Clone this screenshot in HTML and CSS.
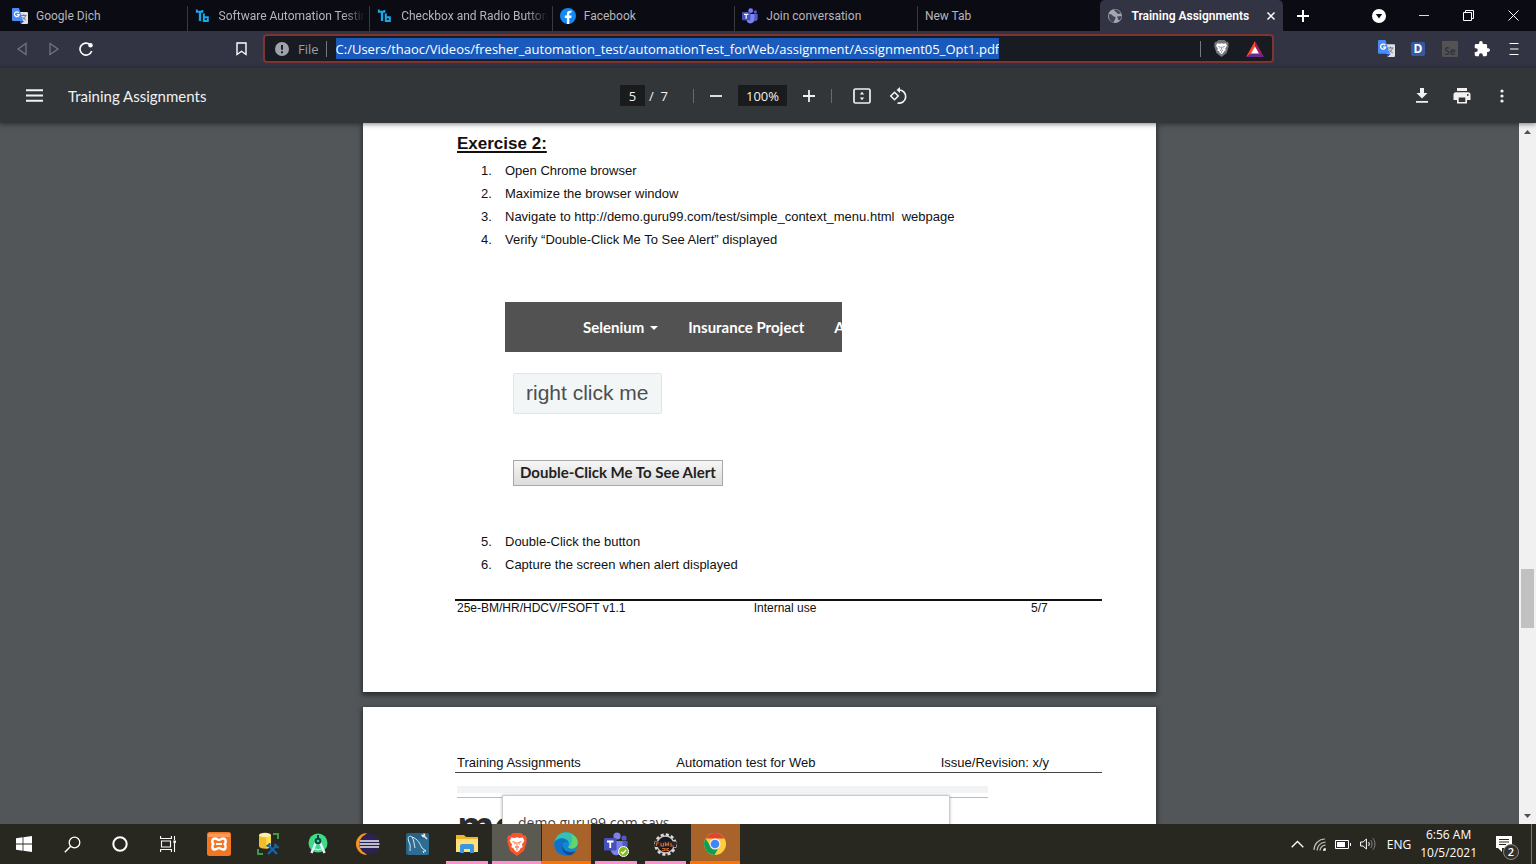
FILE: index.html
```
<!DOCTYPE html>
<html lang="en">
<head>
<meta charset="utf-8">
<title>Training Assignments</title>
<link rel="stylesheet" href="styles.css">
</head>
<body>
<svg class="defs" aria-hidden="true">
  <symbol id="translate" viewBox="0 0 16 16">
    <path d="M6 4h9a1 1 0 0 1 1 1v10a1 1 0 0 1-1 1H9z" fill="#dfe1e5"/>
    <path d="M9 7.500h5.500M11.800 6.200v1.300M13.600 7.500c-.4 2-2 3.700-3.600 4.600M10.600 9c.6 1.300 1.800 2.400 3.300 3" stroke="#6b7078" stroke-width=".9" fill="none"/>
    <path d="M8 13h4l-3 3z" fill="#2a3be0"/>
    <path d="M1 0h6l4 13H1a1 1 0 0 1-1-1V1a1 1 0 0 1 1-1z" fill="#4a8cf5"/>
    <path d="M6.800 4.800A2.400 2.400 0 1 0 7.200 6.700H4.900" stroke="#fff" stroke-width="1.200" fill="none"/>
  </symbol>
  <symbol id="toolsqa" viewBox="0 0 16 16">
    <path d="M1.800 1.500v2.200h5.500V2" stroke="#1ba8e8" stroke-width="1.900" fill="none"/>
    <path d="M5 3v10" stroke="#1ba8e8" stroke-width="2.300"/>
    <path d="M8.800 5.500v7.400h4V9.200h-4" stroke="#1ba8e8" stroke-width="2" fill="none"/>
  </symbol>
  <symbol id="teams" viewBox="0 0 24 24">
    <circle cx="20" cy="6" r="2.600" fill="#5059c9"/>
    <circle cx="13" cy="4" r="3.600" fill="#7b83eb"/>
    <path d="M17 9h6.500v7a3.800 3.800 0 0 1-6.500 2.500z" fill="#5059c9"/>
    <path d="M7 9h11.500v8a6 6 0 0 1-11.500 2.500z" fill="#7b83eb"/>
    <rect x="0" y="6" width="12.500" height="12.500" rx="1.200" fill="#4650bb"/>
    <path d="M3 9.500h6.500M6.250 9.500v6.500" stroke="#fff" stroke-width="1.800"/>
  </symbol>
  <symbol id="lion" viewBox="0 0 24 28">
    <path d="M7 0h10l3 3 2-.2 2 3.200-.7 2L24 10l-3.500 11.500L12 28l-8.500-6.500L0 10l.7-2L0 6l2-3.200L4 3z" fill="currentColor"/>
    <path d="M5 5.500l4 .5 3-.8 3 .8 4-.5 2 4-3 4.500 1 3-3 2-1 2-3 2.500-3-2.500-1-2-3-2 1-3L3 9.500z" fill="#fff"/>
    <path d="M6.500 10.500l3.500 1-.8 2.500M17.500 10.500l-3.500 1 .8 2.500M12 11v4M9.800 17l2.200-1.200 2.200 1.200-2.200 1.500zM12 19v2.500" stroke="currentColor" stroke-width="1.100" fill="none"/>
  </symbol>
</svg>

<div class="tabstrip">
  <nav class="tabs" aria-label="Tabs">
    <a class="tab" href="#"><svg class="fav"><use href="#translate"/></svg><span class="tab-label">Google Dịch</span></a>
    <a class="tab" href="#"><svg class="fav"><use href="#toolsqa"/></svg><span class="tab-label fade">Software Automation Testin</span></a>
    <a class="tab" href="#"><svg class="fav"><use href="#toolsqa"/></svg><span class="tab-label fade">Checkbox and Radio Button</span></a>
    <a class="tab" href="#"><svg class="fav" viewBox="0 0 16 16"><circle cx="8" cy="8" r="8" fill="#1488f5"/><path d="M6.900 16V10H4.800V7.600h2.100V6c0-2.200 1.200-3.300 3.100-3.300l1.600.1v2h-1c-1 0-1.300.5-1.300 1.200v1.600h2.300L11.200 10H9.300v6z" fill="#fff"/></svg><span class="tab-label">Facebook</span></a>
    <a class="tab" href="#"><svg class="fav"><use href="#teams"/></svg><span class="tab-label">Join conversation</span></a>
    <a class="tab" href="#"><span class="tab-label">New Tab</span></a>
    <a class="tab active" href="#"><svg class="fav" viewBox="0 0 16 16"><circle cx="8" cy="8" r="7" fill="#a3a7b0"/><path d="M2 6c2 .5 3 0 3.500 1.500S8 8 8.500 9.500 7 12 6.500 14.500C3 14 1.500 10.500 2 6zM7 1.500c0 2 2 1.500 2.500 3S12 6 14 5.500c-1-2.500-4-4.500-7-4zM10 8.500l4.500-.5c0 2-1 3.500-2.500 4.500-1-.5-1-2.500-2-4z" fill="#414453"/></svg><span class="tab-label">Training Assignments</span><svg class="tab-close" viewBox="0 0 10 10"><path d="M1.500 1.500l7 7M8.500 1.500l-7 7" stroke="#fff" stroke-width="1.500"/></svg></a>
  </nav>
  <button class="new-tab" aria-label="New tab"><svg width="12" height="12" viewBox="0 0 12 12"><path d="M6 0v12M0 6h12" stroke="#fff" stroke-width="2"/></svg></button>
  <div class="win-controls">
    <button aria-label="Search tabs"><svg width="14" height="14" viewBox="0 0 14 14"><circle cx="7" cy="7" r="7" fill="#fff"/><path d="M3.800 5h6.400L7 9.600z" fill="#0b0b14"/></svg></button>
    <button aria-label="Minimize"><svg width="10" height="10" viewBox="0 0 10 10"><path d="M0 4.500h10" stroke="#ddd"/></svg></button>
    <button aria-label="Restore"><svg width="11" height="11" viewBox="0 0 11 11"><path d="M.5 2.500h8v8h-8zM2.500 2.500v-2h8v8h-2" stroke="#fff" fill="none"/></svg></button>
    <button aria-label="Close"><svg width="11" height="11" viewBox="0 0 11 11"><path d="M.5.5l10 10M10.500.5l-10 10" stroke="#fff"/></svg></button>
  </div>
</div>

<div class="navbar">
  <button class="nav-btn" aria-label="Back"><svg width="12" height="14" viewBox="0 0 12 14"><path d="M10 1.500v11L2 7z" stroke="#70737f" stroke-width="1.300" fill="none"/></svg></button>
  <button class="nav-btn" aria-label="Forward"><svg width="12" height="14" viewBox="0 0 12 14"><path d="M2 1.500v11L10 7z" stroke="#70737f" stroke-width="1.300" fill="none"/></svg></button>
  <button class="nav-btn" aria-label="Reload"><svg width="14" height="14" viewBox="0 0 14 14"><path d="M11 2.600A6 6 0 1 0 12.700 9" stroke="#fff" stroke-width="1.600" fill="none"/><circle cx="11.500" cy="3.200" r="2.200" fill="#fff"/></svg></button>
  <button class="nav-btn bookmark" aria-label="Bookmark"><svg width="11" height="14" viewBox="0 0 11 14"><path d="M1 1h9v11.500L5.500 9.300 1 12.500z" stroke="#fff" stroke-width="1.400" fill="none"/></svg></button>
  <div class="address">
    <svg class="info" viewBox="0 0 14 14"><circle cx="7" cy="7" r="7" fill="#9fa2ab"/><path d="M7 3v4.800M7 9.300v2" stroke="#191b22" stroke-width="1.900"/></svg>
    <label class="scheme" for="url">File</label>
    <span class="bar"></span>
    <input id="url" class="url" type="text" spellcheck="false" value="C:/Users/thaoc/Videos/fresher_automation_test/automationTest_forWeb/assignment/Assignment05_Opt1.pdf">
    <span class="bar end"></span>
    <button class="addr-btn" aria-label="Brave Shields"><svg class="shield" width="15" height="17"><use href="#lion"/></svg></button>
    <button class="addr-btn" aria-label="Brave Rewards"><svg width="18" height="16" viewBox="0 0 18 16"><path d="M9 0L0 16l9-5z" fill="#ff4724"/><path d="M9 0l9 16-9-5z" fill="#9e1f63"/><path d="M0 16h18l-9-6z" fill="#662d91"/><path d="M9 5.500l4 7H5z" fill="#fff"/></svg></button>
  </div>
  <div class="extensions">
    <button class="nav-btn" aria-label="Google Translate"><svg width="17" height="17"><use href="#translate"/></svg></button>
    <button class="nav-btn" aria-label="Dictionary"><span class="ext-d">D</span></button>
    <button class="nav-btn" aria-label="Selenium IDE"><span class="ext-se">Se</span></button>
    <button class="nav-btn" aria-label="Extensions"><svg width="16" height="16" viewBox="1 1 22 22"><path d="M20.500 11H19V7a2 2 0 0 0-2-2h-4V3.500a2.500 2.500 0 0 0-5 0V5H4a2 2 0 0 0-2 2v3.800h1.500a2.700 2.700 0 0 1 0 5.400H2V20c0 1.100.9 2 2 2h3.800v-1.500a2.700 2.700 0 0 1 5.400 0V22H17a2 2 0 0 0 2-2v-4h1.500a2.500 2.500 0 0 0 0-5z" fill="#fff"/></svg></button>
    <button class="nav-btn" aria-label="Menu"><svg width="10" height="14" viewBox="0 0 10 14"><path d="M.5 1.500h9M1 7h8.500M.5 12.500h9" stroke="#fff" stroke-width="1.200"/></svg></button>
  </div>
</div>

<div class="pdf-bar">
  <div class="pdf-left">
    <button class="icon-btn wide" aria-label="Sidebar"><svg width="17" height="13" viewBox="0 0 17 13"><path d="M0 1.200h17M0 6.500h17M0 11.800h17" stroke="#f1f1f1" stroke-width="1.900"/></svg></button>
    <span class="doc-title">Training Assignments</span>
  </div>
  <div class="pdf-center">
    <input class="page-no" type="text" value="5" aria-label="Page number">
    <span class="page-total">/&nbsp; 7</span>
    <span class="sep"></span>
    <button class="icon-btn" aria-label="Zoom out"><svg width="12" height="12" viewBox="0 0 12 12"><path d="M0 6h12" stroke="#f1f1f1" stroke-width="1.800"/></svg></button>
    <input class="zoom" type="text" value="100%" aria-label="Zoom level">
    <button class="icon-btn" aria-label="Zoom in"><svg width="12" height="12" viewBox="0 0 12 12"><path d="M0 6h12M6 0v12" stroke="#f1f1f1" stroke-width="1.800"/></svg></button>
    <span class="sep tight"></span>
    <button class="icon-btn fit" aria-label="Fit to page"><svg width="18" height="16" viewBox="0 0 18 16"><rect x="1" y="1" width="16" height="14" rx="1.500" stroke="#f1f1f1" stroke-width="1.700" fill="none"/><path d="M6.800 6.500L9 3.700l2.200 2.800zM6.800 9.500L9 12.300l2.200-2.800z" fill="#f1f1f1"/></svg></button>
    <button class="icon-btn rotate" aria-label="Rotate"><svg width="18" height="18" viewBox="0 0 18 18"><path d="M5.500 5.300L9.200 9l-3.700 3.700L1.800 9z" stroke="#f1f1f1" stroke-width="1.600" fill="none"/><path d="M10 3a6.600 6.600 0 1 1-1.500 13" stroke="#f1f1f1" stroke-width="1.700" fill="none"/><path d="M11 0v6L7.500 3z" fill="#f1f1f1"/></svg></button>
  </div>
  <div class="pdf-right">
    <button class="icon-btn" aria-label="Download"><svg width="12" height="15" viewBox="0 0 12 15"><path d="M4 0h4v5h3.500L6 10.500.5 5H4zM0 13h12v1.700H0z" fill="#f1f1f1"/></svg></button>
    <button class="icon-btn" aria-label="Print"><svg width="18" height="16" viewBox="0 0 18 16"><path d="M4 0h10v3H4zM3 4.200h12a2.500 2.500 0 0 1 2.500 2.500V12H14v3.500H4V12H.5V6.700A2.500 2.500 0 0 1 3 4.200z" fill="#f1f1f1"/><path d="M5.700 9.500h6.600V14H5.700z" fill="#323639"/><circle cx="14.800" cy="7" r=".9" fill="#323639"/></svg></button>
    <button class="icon-btn" aria-label="More actions"><svg width="4" height="14" viewBox="0 0 4 14"><circle cx="2" cy="2" r="1.600" fill="#f1f1f1"/><circle cx="2" cy="7" r="1.600" fill="#f1f1f1"/><circle cx="2" cy="12" r="1.600" fill="#f1f1f1"/></svg></button>
  </div>
</div>

<div class="viewer">
  <main class="pages">
    <article class="page">
      <h1 class="exercise">Exercise 2:</h1>
      <ol class="steps">
        <li>Open Chrome browser</li>
        <li>Maximize the browser window</li>
        <li>Navigate to http://demo.guru99.com/test/simple_context_menu.html&nbsp; webpage</li>
        <li>Verify “Double-Click Me To See Alert” displayed</li>
      </ol>
      <div class="demo">
        <div class="demo-nav">
          <a href="#">Selenium<span class="caret"></span></a>
          <a href="#">Insurance Project</a>
          <a href="#">A</a>
        </div>
        <button class="right-click">right click me</button>
        <button class="double-click">Double-Click Me To See Alert</button>
      </div>
      <ol class="steps more" start="5">
        <li>Double-Click the button</li>
        <li>Capture the screen when alert displayed</li>
      </ol>
      <footer class="page-foot"><span>25e-BM/HR/HDCV/FSOFT v1.1</span><span>Internal use</span><span>5/7</span></footer>
    </article>
    <article class="page next">
      <header class="page-head"><span>Training Assignments</span><span>Automation test for Web</span><span>Issue/Revision: x/y</span></header>
      <div class="alert-shot">
        <div class="shot-strip"></div>
        <div class="shot-heading">me</div>
        <div class="shot-dialog">demo.guru99.com says</div>
      </div>
    </article>
  </main>
  <div class="scrollbar">
    <svg width="7" height="4" viewBox="0 0 7 4"><path d="M0 4L3.500 0 7 4z" fill="#505050"/></svg>
    <div class="track"><div class="thumb"></div></div>
    <svg width="7" height="4" viewBox="0 0 7 4"><path d="M0 0l3.500 4L7 0z" fill="#505050"/></svg>
  </div>
</div>

<div class="taskbar">
  <div class="system">
    <button class="task" aria-label="Start"><svg width="16" height="16" viewBox="0 0 16 16"><path d="M0 2.200l6.600-.9v6.300H0zM7.400 1.200L16 0v7.600H7.400zM0 8.400h6.600v6.300L0 13.800zM7.400 8.400H16V16l-8.600-1.200z" fill="#fff"/></svg></button>
    <button class="task" aria-label="Search"><svg width="17" height="17" viewBox="0 0 17 17"><circle cx="10.500" cy="6.500" r="5.300" stroke="#fff" stroke-width="1.300" fill="none"/><path d="M6.700 10.300L.8 16.200" stroke="#fff" stroke-width="1.400"/></svg></button>
    <button class="task" aria-label="Cortana"><svg width="16" height="16" viewBox="0 0 16 16"><circle cx="8" cy="8" r="6.700" stroke="#fff" stroke-width="2" fill="none"/></svg></button>
    <button class="task" aria-label="Task view"><svg width="17" height="16" viewBox="0 0 17 16"><path d="M.6 0v2.500h10.800V0M.6 16v-2.500h10.800V16M1.500 5h9v6h-9zM14.500 0v4M14.500 7v9" stroke="#fff" stroke-width="1.100" fill="none"/><path d="M13.400 4.500h2.500V7h-2.500z" fill="#fff"/></svg></button>
  </div>
  <div class="apps">
    <button class="task" aria-label="XAMPP"><svg width="24" height="24" viewBox="0 0 24 24"><rect width="24" height="24" rx="2.500" fill="#f37623"/><path d="M1 1.500h22V5H1z" fill="#f89a59"/><path d="M8 6.500c2 0 3 1.500 4 1.500s2-1.500 4-1.500c2.600 0 3.700 3.400 1.700 5.500 2 2.100.9 5.500-1.700 5.500-2 0-3-1.500-4-1.500s-2 1.500-4 1.500c-2.600 0-3.700-3.400-1.700-5.500C4.300 9.900 5.400 6.500 8 6.500z" stroke="#fff" stroke-width="2.500" fill="none"/><path d="M9 12h6" stroke="#fff" stroke-width="2"/></svg></button>
    <button class="task" aria-label="SQL Server"><svg width="24" height="24" viewBox="0 0 24 24"><path d="M17 2h5v5M2 17v5h5" stroke="#3e9a43" stroke-width="2" fill="none"/><path d="M3 3v11c0 3.500 12 3.500 12 0V3z" fill="#f3bd29"/><path d="M10 3v13.500c3-.3 5-1.300 5-2.500V3z" fill="#ffdc4a"/><ellipse cx="9" cy="3" rx="6" ry="2.200" fill="#fff0ad"/><path d="M12 13l9 9M21 13l-9 9" stroke="#1864a8" stroke-width="2.300"/><path d="M10.500 14.500l4-3M18.500 12l2.500 3 2 .5" stroke="#1864a8" stroke-width="2"/></svg></button>
    <button class="task" aria-label="Android Studio"><svg width="22" height="22" viewBox="0 0 22 22"><circle cx="11" cy="10" r="9.500" fill="#3ddc84"/><path d="M10 7L4.500 20M12 7l5.500 13" stroke="#e3effa" stroke-width="2.500"/><path d="M6 15c3 2 7 2 10 0" stroke="#e3effa" stroke-width="1.500" fill="none"/><circle cx="11" cy="8" r="3.300" fill="#123d4f"/><circle cx="11" cy="8" r="1.300" fill="#3ddc84"/><path d="M11 2v3" stroke="#123d4f" stroke-width="2"/></svg></button>
    <button class="task" aria-label="Eclipse"><svg width="24" height="24" viewBox="0 0 24 24"><path d="M11 1A11 11 0 0 0 11 23 15 15 0 0 1 11 1z" fill="#f7941e"/><circle cx="13.500" cy="12" r="10.300" fill="#2c2255"/><path d="M4 9h19M3.500 12h20M4 15h19" stroke="#eee" stroke-width="1.700"/></svg></button>
    <button class="task" aria-label="MySQL Workbench"><svg width="23" height="22" viewBox="0 0 23 22"><rect width="23" height="22" rx="2" fill="#256287"/><path d="M2 6h21v16H2z" fill="#34789c" opacity=".5"/><path d="M4 18c0-4 1-5-1-9-2-5 0-7 3-5 6 2 8 7 10 11l4 3-3 .3 1 2M6 4c2 3 2 7 3 11" stroke="#dceaf2" stroke-width="1" fill="none"/><path d="M17 2l4 4M16 1.500c0 2 1.500 2.500 2.500 2M18 3c1-1 .5-2-.5-2" stroke="#e9e9e9" stroke-width="1.500" fill="none"/></svg></button>
    <button class="task running" aria-label="File Explorer"><svg width="22" height="20" viewBox="0 0 22 20"><path d="M0 1h8l2 2h12v14H0z" fill="#f0b429"/><path d="M0 5h22v13H0z" fill="#ffe07a"/><path d="M4 19v-7a2 2 0 0 1 2-2h10a2 2 0 0 1 2 2v7h-4v-4H8v4z" fill="#3a96dd"/></svg></button>
    <button class="task running selected" aria-label="Brave"><svg class="brave" width="20" height="23"><use href="#lion"/></svg></button>
    <button class="task running alerting" aria-label="Edge"><svg width="24" height="24" viewBox="0 0 24 24"><circle cx="12" cy="12" r="11.700" fill="#1686cf"/><path d="M.5 10C2 3 7 .3 12 .3 18.500.3 23.700 5 23.700 10.500c0 4-3 6-6 6-2.500 0-4-.8-3.500-2 1-1 1-2 .8-3C14.500 8 11 6.500 8 6.500c-4 0-6.500 2-7.500 3.500z" fill="#35c1b1"/><path d="M17 2c5 3 6.700 5 6.700 8.500 0 4-3 6-6 6-2 0-3.500-.8-3.300-1.600C19 13 19 6 17 2z" fill="#62d66a"/><path d="M8.500 12c-1.800 4.500 2 10.500 7.500 11-7 2-15.700-2-15.700-11C1 8 4.500 6.500 8 6.500c4 0 6.500 2.500 6.800 5-2-2.500-5-2-6.300.5z" fill="#0d72c9"/><path d="M9 11.500c-2 5.500 4 10.500 12.500 7.500-2 3-4 4-5.500 4.200C9.500 22.500 6.500 17 9 11.500z" fill="#124c98"/></svg></button>
    <button class="task running" aria-label="Teams"><span class="badged"><svg width="24" height="24"><use href="#teams"/></svg><svg class="ok" width="11" height="11" viewBox="0 0 11 11"><circle cx="5.500" cy="5.500" r="5" fill="#83b81a" stroke="#fff"/><path d="M3 5.700l1.800 1.800 3.300-3.500" stroke="#fff" stroke-width="1.300" fill="none"/></svg></span></button>
    <button class="task running" aria-label="Test tool"><svg width="23" height="23" viewBox="0 0 23 23"><circle cx="11.500" cy="11.500" r="9.700" stroke="#dadada" stroke-width="3" stroke-dasharray="3 2.080" fill="none"/><circle cx="11.500" cy="11.500" r="8.600" stroke="#c7c7c7" stroke-width="1.500" fill="#171921"/><path d="M1 8.500h21v5.500H1z" fill="#28212a"/><path d="M2.500 13v-3H5M7 10v3h2.500v-3M11.500 13v-3l1.500 2 1.500-2v3M17 10v3h3M8 15.500h3v2H8M15 15.500h-2v2h2" stroke="#c56a2c" stroke-width="1.200" fill="none"/></svg></button>
    <button class="task running alerting" aria-label="Chrome"><svg width="22" height="22" viewBox="0 0 22 22"><circle cx="11" cy="11" r="11" fill="#ffcd40"/><path d="M1.500 5.500A11 11 0 0 1 20.500 5.500H11z" fill="#db4437"/><path d="M1.500 5.500A11 11 0 0 0 10.500 22L15.300 13.500 11 16 6.700 13.500z" fill="#0f9d58"/><circle cx="11" cy="11" r="5.500" fill="#f1f1f1"/><circle cx="11" cy="11" r="4.300" fill="#4285f4"/></svg></button>
  </div>
  <div class="tray">
    <svg width="13" height="8" viewBox="0 0 13 8"><path d="M.7 7.300L6.500 1.500l5.800 5.800" stroke="#fff" stroke-width="1.300" fill="none"/></svg>
    <svg width="13" height="13" viewBox="0 0 13 13"><path d="M1 12A11 11 0 0 1 12 1M4 12.500a8.500 8.500 0 0 1 8.500-8.300M7 12.500a5.500 5.500 0 0 1 5.500-5.300" stroke="#bbb" stroke-width="1.200" fill="none"/><path d="M10 12.700a2.700 2.700 0 0 1 2.700-2.700v2.700z" fill="#fff"/></svg>
    <svg width="16" height="9" viewBox="0 0 16 9"><path d="M.5.500h13v8H.5zM15.500 3v3" stroke="#fff" fill="none"/><path d="M2 2h8v5H2z" fill="#fff"/></svg>
    <svg width="16" height="14" viewBox="0 0 16 14"><path d="M.6 5h2.500L6.400 2v10L3.100 9H.6z" stroke="#fff" fill="none"/><path d="M8.500 5c1 1 1 3 0 4" stroke="#fff" fill="none"/><path d="M10.500 3c2 2 2 6 0 8M12.700 1.200c3 3 3 8.600 0 11.600" stroke="#888" fill="none"/></svg>
    <span class="lang">ENG</span>
    <time class="clock">6:56 AM<br>10/5/2021</time>
    <button class="notice" aria-label="Notifications"><svg width="16" height="16" viewBox="0 0 16 16"><path d="M0 0h16v12H6v4l-4-4H0z" fill="#fff"/><path d="M3 3.500h10M3 6h10M3 8.500h7" stroke="#26251f"/></svg><span class="count">2</span></button>
  </div>
</div>
</body>
</html>
```
FILE: styles.css
```
* { box-sizing: border-box; }
body {
  margin: 0;
  height: 100vh;
  display: flex;
  flex-direction: column;
  overflow: hidden;
  font-family: "Open Sans", "Noto Sans", sans-serif;
  font-size: 12px;
  background: #525659;
}
button, input { font: inherit; color: inherit; border: 0; padding: 0; margin: 0; background: none; }
button { display: flex; align-items: center; justify-content: center; }
a { color: inherit; text-decoration: none; }
svg { display: block; flex: none; }
.defs { position: absolute; width: 0; height: 0; }

/* Tab strip */
.tabstrip { display: flex; height: 31px; flex: none; background: #0b0b14; color: #b6b6b8; font-family: Roboto, "Open Sans", sans-serif; }
.tabs { display: flex; flex: 0 1 1283px; min-width: 0; padding-left: 5px; }
.tab { flex: 1 1 0; min-width: 0; display: flex; align-items: center; gap: 8px; padding: 0 4px 0 7px; border-right: 1px solid transparent; border-image: linear-gradient(transparent 7px, #393942 7px) 1; }
.tab:nth-last-child(-n+2) { border-image: none; }
.tab.active { background: #323443; color: #fff; font-weight: 600; border-radius: 5px 5px 0 0; }
.fav { width: 16px; height: 16px; }
.tab-label { flex: 1; overflow: hidden; white-space: nowrap; }
.fade { mask-image: linear-gradient(90deg, #000 85%, transparent); }
.tab-close { width: 10px; height: 10px; margin-right: 2px; }
.new-tab { width: 40px; }
.win-controls { display: flex; margin-left: auto; }
.win-controls button { width: 45px; }

/* Navigation bar */
.navbar { display: flex; align-items: center; height: 37px; flex: none; padding: 0 6px 2px; background: #323443; color: #fff; }
.nav-btn { width: 32px; height: 32px; flex: none; }
.bookmark { margin-left: 123px; }
.address { flex: 1; min-width: 0; display: flex; align-items: center; height: 29px; margin: 0 96px 0 6px; padding: 0 0 0 10px; border: 2px solid #7e352f; border-radius: 4px; background: #191b22; font-size: 13px; }
.info { width: 14px; height: 14px; margin-right: 9px; }
.scheme { color: #9b9ea6; }
.bar { width: 1px; height: 16px; margin: 0 9px 0 7px; background: #777982; flex: none; }
.bar.end { margin: 0 3px 0 auto; }
.url { field-sizing: content; min-width: 0; height: 21px; background: #1a5abc; color: #fff; outline: 0; }
.addr-btn { width: 34px; height: 24px; flex: none; }
.shield { color: #74767c; }
.extensions { display: flex; }
.ext-d { width: 14px; height: 14px; border-radius: 2px; background: #3758a0; font-weight: 700; line-height: 14px; }
.ext-se { width: 16px; height: 16px; padding: 5px 0 0; background: #535353; color: #303348; font-size: 10px; font-weight: 700; line-height: 11px; border-radius: 1px; }

/* PDF toolbar */
.pdf-bar { display: grid; grid-template-columns: 1fr auto 1fr; align-items: center; height: 55px; flex: none; padding: 0 22px 0 14px; background: #323639; color: #f1f1f1; font-family: Lato, sans-serif; font-size: 14px; box-shadow: 0 1px 5px rgba(0, 0, 0, .5); z-index: 1; }
.pdf-left, .pdf-center, .pdf-right { display: flex; align-items: center; }
.pdf-center { margin-left: 2px; }
.pdf-right { justify-content: flex-end; gap: 16px; }
.icon-btn { width: 24px; height: 32px; }
.icon-btn.wide { width: 40px; }
.doc-title { margin-left: 14px; font-size: 15px; }
.page-no, .zoom { height: 21px; background: #191b1c; text-align: center; font-family: "Open Sans", sans-serif; font-size: 13px; font-weight: 500; }
.page-no { width: 25px; }
.zoom { width: 49px; margin: 0 10px; }
.page-total { width: 22px; margin-left: 4px; white-space: nowrap; font-family: "Open Sans", sans-serif; font-size: 13px; font-weight: 500; }
.sep { width: 1px; height: 14px; margin: 0 10px 0 22px; background: #686b6e; }
.sep.tight { margin: 0 18px 0 10px; }
.rotate { margin-left: 12px; }

/* Document */
.viewer { flex: 1; min-height: 0; display: flex; overflow: hidden; }
.pages { flex: 1; min-width: 0; display: flex; flex-direction: column; align-items: center; gap: 15px; }
.page { flex: none; width: 793px; max-width: 100%; padding: 10px 54px 77px 94px; background: #fff; color: #111; box-shadow: 0 2px 5px 1px rgba(0, 0, 0, .5); font-family: "Liberation Sans", Arial, sans-serif; font-size: 13px; }
.exercise { margin: 0; font-size: 17px; line-height: 22px; text-decoration: underline; text-decoration-thickness: 2px; text-underline-offset: 2px; }
.steps { margin: 4px 0 0; padding-left: 48px; line-height: 23px; counter-reset: step; }
.steps.more { counter-reset: step 4; margin-top: 44px; }
.steps li { display: flex; list-style: none; counter-increment: step; }
.steps li::before { content: counter(step) "."; width: 24px; margin-left: -24px; flex: none; }
.demo { display: flex; flex-direction: column; align-items: flex-start; margin: 51px 0 0 48px; font-family: Lato, sans-serif; font-weight: 700; }
.demo-nav { width: 337px; height: 50px; display: flex; align-items: center; gap: 30px; padding: 0 0 0 78px; overflow: hidden; background: #525252; color: #fff; font-size: 15px; white-space: nowrap; }
.caret { display: inline-block; margin: 0 0 3px 6px; border: 4px solid transparent; border-top-color: #fff; border-bottom: 0; }
.right-click { height: 41px; margin: 21px 0 0 8px; padding: 0 12px 2px; border: 1px solid #e0e6e7; border-radius: 2px; background: #f2f6f7; color: #4b4f51; font-family: "Liberation Sans", Arial, sans-serif; font-size: 21px; font-weight: 400; }
.double-click { height: 26px; margin: 46px 0 0 8px; padding: 0 6px 2px; border: 1px solid #a8a8a8; background: linear-gradient(#f6f6f6, #dcdcdc); color: #222; font-size: 15px; font-weight: 700; }
.page-foot, .page-head { display: grid; margin-left: -2px; padding-left: 2px; }
.page-foot { grid-template-columns: 46% 43% auto; margin-top: 23px; border-top: 2px solid #111; font-size: 12px; line-height: 14px; }
.page.next { padding-top: 46px; }
.page-head { grid-template-columns: 34% 41% auto; border-bottom: 1px solid #444; line-height: 19px; }
.alert-shot { position: relative; width: 531px; margin-top: 13px; }
.shot-strip { height: 12px; border-top: 7px solid #f1f3f4; border-bottom: 1px solid #bbb; }
.shot-heading { color: #2c2c2c; font-family: "Open Sans", sans-serif; font-size: 38px; font-weight: 700; line-height: 52px; }
.shot-dialog { position: absolute; left: 45px; top: 9px; width: 448px; height: 120px; padding: 17px 15px; background: #fff; color: #444; border: 1px solid #ccc; border-radius: 2px; box-shadow: 0 0 3px rgba(0, 0, 0, .3); font-family: "Open Sans", sans-serif; font-size: 14px; line-height: 20px; }
.scrollbar { width: 17px; flex: none; display: flex; flex-direction: column; align-items: center; padding: 7px 1px 6px; background: #f1f1f1; }
.track { flex: 1; width: 100%; padding: 435px 1px 0; }
.thumb { height: 59px; background: #c1c1c1; }

/* Taskbar */
.taskbar { display: flex; height: 40px; flex: none; background: #292820; color: #fff; z-index: 1; }
.system, .apps { display: flex; }
.apps { flex: 0 1 546px; margin-left: 2px; }
.task { position: relative; width: 48px; height: 40px; }
.apps .task { flex: 1; }
.running::after { content: ""; position: absolute; left: 4px; right: 4px; bottom: 0; height: 3px; background: #fa92cf; }
.selected { background: #5b5a52; }
.brave { color: #fb542b; }
.alerting { background: #a8632a; box-shadow: inset 1px 0 #292820; }
.alerting::after { background: #fb7405; }
.selected::after, .alerting::after { left: 0; right: 0; }
.badged { position: relative; }
.ok { position: absolute; right: -1px; bottom: -1px; }
.tray { display: flex; align-items: center; margin-left: auto; gap: 9px; border-right: 1px solid #77766f; margin-right: 4px; }
.lang { margin-left: 2px; }
.clock { text-align: center; line-height: 18px; }
.notice { position: relative; width: 36px; height: 40px; margin: 0 9px 0 0; }
.count { position: absolute; right: 3px; bottom: 4px; width: 16px; height: 16px; border: 1px solid #888; border-radius: 50%; background: #33322c; font-size: 11px; font-weight: 600; line-height: 14px; text-align: center; }
```
